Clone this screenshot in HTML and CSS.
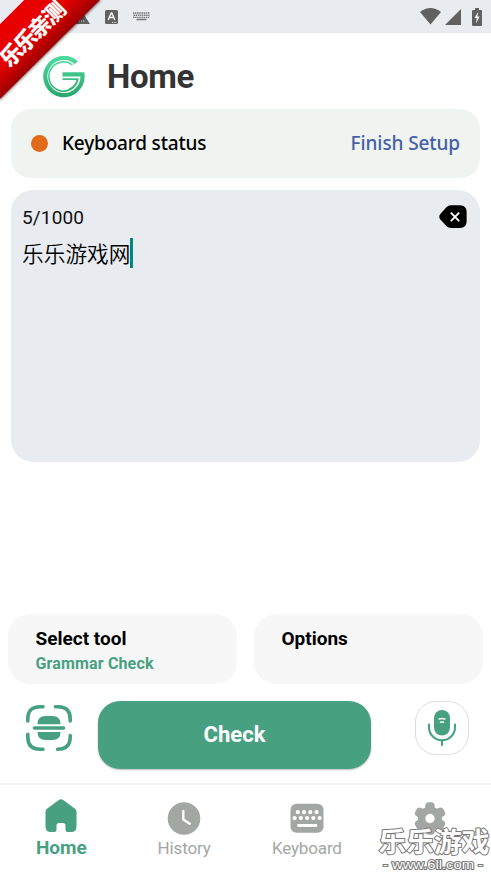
FILE: index.html
```html
<!DOCTYPE html>
<html lang="en">
<head>
<meta charset="utf-8">
<title>Home</title>
<link rel="stylesheet" href="styles.css">
</head>
<body>
<div class="app">
  <div class="statusbar">
    <div class="status-left">
      <svg width="18" height="16" viewBox="0 0 18 16"><path d="M8 1 17 15H0Z" fill="#616161"/><path d="M6 12h6" stroke="#ddd" stroke-dasharray="1 1"/></svg>
      <svg width="13" height="14" viewBox="0 0 13 14"><rect width="13" height="14" rx="1.5" fill="#616161"/><path d="M3.2 10 6.2 3h.6l3 7M4.4 7.6h4.2" fill="none" stroke="#eef0f3" stroke-width="1.5"/><path d="M7 12.500h4.500" stroke="#ddd" stroke-dasharray="1 .7"/></svg>
      <svg width="17" height="9" viewBox="0 0 17 9"><path d="M0 1h17M.5 3.200h16M0 5.400h17" stroke="#777" stroke-width="1.400" stroke-dasharray="1.500 .6"/><path d="M3.500 7.500h10" stroke="#777" stroke-width="1.500"/></svg>
    </div>
    <div class="status-right">
      <svg width="21" height="17" viewBox="0 0 21 17"><path d="M0 4Q10.500-4 21 4L10.500 16.500Z" fill="#616161"/></svg>
      <svg width="16" height="16" viewBox="0 0 16 16"><path d="M16 0V16H0Z" fill="#616161"/></svg>
      <svg width="10" height="18" viewBox="0 0 10 18"><path d="M3 0h4v2h2q1 0 1 1v14q0 1-1 1H1q-1 0-1-1V3Q0 2 1 2h2Z" fill="#616161"/><path d="M6 4 2.500 10h2.200L4 15.500 7.700 8.500H5.500Z" fill="#eef0f3"/></svg>
    </div>
  </div>

  <header class="header">
    <svg class="logo" width="42" height="42" viewBox="0 0 42 42">
      <defs><linearGradient id="lg" x1="0" y1="0" x2="0" y2="42" gradientUnits="userSpaceOnUse"><stop stop-color="#4fdc9f"/><stop offset="1" stop-color="#27a56d"/></linearGradient></defs>
      <g fill="none" stroke="url(#lg)">
        <path d="M33.300 6.600A18.600 18.600 0 1 0 39.400 18.400H19.500" stroke-width="4.200"/>
        <path d="M29.500 9A14.600 14.600 0 1 0 34.800 23.400" stroke-width="1.500"/>
        <path d="M19.500 23.200H34.600Q33 31 25.500 33.700" stroke-width="1.700"/>
      </g>
    </svg>
    <h1>Home</h1>
  </header>

  <main>
    <section class="status-card">
      <i class="dot"></i>
      <span class="label">Keyboard status</span>
      <span class="setup">Finish Setup</span>
    </section>

    <section class="editor">
      <div class="editor-top">
        <span class="count">5/1000</span>
        <svg width="28" height="24" viewBox="0 0 28 24"><path d="M1.400 9 7.600 2Q9.300.3 12 .3h9Q27.600.3 27.600 7v9.500q0 6.500-6.600 6.500h-9q-2.700 0-4.400-1.700L1.400 14.500Q-.8 11.700 1.400 9Z"/><path d="m12.300 8.200 7.400 7.400m0-7.400-7.400 7.400" stroke="#fff" stroke-width="1.900" stroke-linecap="round"/></svg>
      </div>
      <div class="entry"><span>乐乐游戏网</span><i class="caret"></i></div>
    </section>

    <section class="tools">
      <div class="tool"><b>Select tool</b><span>Grammar Check</span></div>
      <div class="tool"><b>Options</b></div>
    </section>

    <section class="actions">
      <svg class="scan" width="46" height="46" viewBox="0 0 46 46">
        <path d="M1.800 16v-2Q1.800 1.800 14 1.800h3M29.500 1.800h2.700q12 0 12 12.200v2M1.800 29.200V32q0 12.200 12.200 12.200h3M31.500 44.200Q44.200 44.200 44.200 32v-1.500" fill="none" stroke="#47a181" stroke-width="3.600" stroke-linecap="round"/>
        <path d="M11.500 19.200q0-8.200 8-8.200h7q8 0 8 8.200ZM11.500 27h23q0 8-8 8h-7q-8 0-8-8Z" fill="#47a181"/>
        <path d="M8.500 23h29" stroke="#47a181" stroke-width="3.600" stroke-linecap="round"/>
      </svg>
      <button class="check">Check</button>
      <div class="mic">
        <svg width="30" height="38" viewBox="0 0 30 38"><rect x="7" y="1" width="16" height="25.500" rx="8" fill="#47a181"/><path d="M2 15.500v2.700a13 13 0 0 0 26 0v-2.700M15 31.500V36" fill="none" stroke="#47a181" stroke-width="2.100" stroke-linecap="round"/><path d="M12.200 10q2.800-1 5.600 0M13.500 13.300q1.500-.4 3 0" fill="none" stroke="#fff" stroke-width="1.500" stroke-linecap="round"/></svg>
      </div>
    </section>
  </main>

  <nav class="nav">
    <div class="tab active">
      <svg width="34" height="36" viewBox="0 0 34 36"><path d="M1.500 13.500Q1.500 12 3 10.800L14.500 2.200Q17 .5 19.500 2.200L31 10.800q1.500 1.200 1.500 2.700v15q0 5.500-5.500 5.500h-3q-2.500 0-2.500-2.500v-3.700Q21.500 25 18.800 25h-3.600q-2.700 0-2.700 2.800v3.700Q12.500 34 10 34H7q-5.500 0-5.500-5.500Z" fill="#47a181"/></svg>
      <span>Home</span>
    </div>
    <div class="tab">
      <svg width="34" height="37" viewBox="0 0 34 37"><circle cx="17" cy="20.500" r="16.300" fill="#a2a7a3"/><path d="M16.300 13v8.500l6.500 4.200" fill="none" stroke="#fff" stroke-width="2.400" stroke-linecap="round" stroke-linejoin="round"/></svg>
      <span>History</span>
    </div>
    <div class="tab">
      <svg width="34" height="37" viewBox="0 0 34 37"><rect x=".5" y="5.800" width="33" height="29" rx="6" fill="#a2a7a3"/><g stroke="#fff" stroke-linecap="round"><path d="M7.800 14.200h19" stroke-width="4.200" stroke-dasharray="0 6.250"/><path d="M4.600 20.100h25.500" stroke-width="4.200" stroke-dasharray="0 6.250"/><path d="M8.500 27.500h17.500" stroke-width="2.800"/></g></svg>
      <span>Keyboard</span>
    </div>
    <div class="tab">
      <svg width="34" height="37" viewBox="0 0 34 37"><g fill="#a2a7a3"><circle cx="17" cy="20.500" r="12"/><g id="tooth"><rect x="12.300" y="4.300" width="9.400" height="32.400" rx="3.500"/></g><use href="#tooth" transform="rotate(60 17 20.500)"/><use href="#tooth" transform="rotate(120 17 20.500)"/></g><circle cx="17" cy="20.500" r="4.700" fill="#fff"/></svg>
    </div>
  </nav>

  <div class="ribbon">
    <svg width="104" height="104" viewBox="0 0 104 104">
      <defs><linearGradient id="red" x1="25" y1="25" x2="52" y2="52" gradientUnits="userSpaceOnUse"><stop stop-color="#e80000"/><stop offset=".35" stop-color="#e30000"/><stop offset="1" stop-color="#930000"/></linearGradient><filter id="sh"><feGaussianBlur stdDeviation="1.300"/></filter></defs>
      <path d="M24 0H102L0 101V24Z" fill="#0006" filter="url(#sh)"/>
      <path d="M24 0H100L0 99V24Z" fill="url(#red)"/>
      <path d="M0 0H24L0 24Z" fill="#e8ebf0"/>
      <text class="ribbon-text" transform="translate(9.500 68.500) rotate(-45)">乐乐亲测</text>
    </svg>
  </div>
  <div class="watermark">
    <svg width="116" height="50" viewBox="0 0 116 50">
      <text class="wm-name" x="3.500" y="28" textLength="111" lengthAdjust="spacingAndGlyphs">乐乐游戏</text>
      <text class="wm-url" x="8" y="45" textLength="100" lengthAdjust="spacingAndGlyphs">- www.6ll.com -</text>
    </svg>
  </div>
</div>
</body>
</html>
```
FILE: styles.css
```css
* { box-sizing: border-box; }
body { margin: 0; background: #fff; font-family: Roboto, "Noto Sans CJK SC", sans-serif; }
.app { position: relative; width: 491px; height: 874px; overflow: hidden; display: flex; flex-direction: column; }
svg { display: block; flex: none; }

.statusbar { height: 33px; background: #e8ebf0; display: flex; justify-content: space-between; padding: 0 9px 0 73px; }
.status-left, .status-right { display: flex; align-items: center; }
.status-left { gap: 14px; }
.status-left svg:last-child { margin-left: 1px; }
.status-right { gap: 4px; }
.status-right svg:last-child { margin-left: 7px; }

.header { height: 76px; display: flex; align-items: center; padding: 11px 0 0 43px; gap: 22px; }
.header h1 { margin: 0; font-size: 33px; line-height: 40px; font-weight: 700; letter-spacing: -.3px; color: #333; }

main { flex: none; }
.status-card { margin: 0 11px; height: 69px; border-radius: 20px; background: #eff4f0; display: flex; align-items: center; padding: 0 20px 1px; font: 500 19px/26px "Noto Sans", sans-serif; letter-spacing: -.18px; }
.dot { width: 17px; height: 17px; border-radius: 50%; background: #e26a1b; margin-right: 14px; }
.label { color: #000; }
.setup { color: #4460a8; margin-left: auto; letter-spacing: -.1px; }

.editor { margin: 12px 11px 0; height: 272px; border-radius: 22px; background: #e8ebf0; padding: 15px 13px 0 11px; }
.editor-top { display: flex; justify-content: space-between; height: 25px; }
.count { font-size: 19px; line-height: 25px; letter-spacing: .15px; color: #111; }
.entry { display: flex; align-items: center; margin-top: 8px; height: 30px; font: 350 21.7px/30px "Noto Sans CJK SC", sans-serif; color: #000; }
.caret { width: 3px; height: 30px; background: #00897b; }

.tools { display: flex; gap: 17px; margin: 152px 8px 0; }
.tool { flex: 1; height: 70px; border-radius: 22px; background: #f7f7f7; padding: 12px 0 0 27.5px; display: flex; flex-direction: column; }
.tool b { font-weight: 700; font-size: 19px; line-height: 26px; color: #000; }
.tool span { font-weight: 700; font-size: 16px; line-height: 23px; letter-spacing: .15px; color: #47a181; }

.actions { display: flex; height: 68px; margin: 17px 22px 0 26px; justify-content: space-between; align-items: flex-start; }
.scan { margin-top: 4px; }
.check { width: 273px; height: 68px; margin-left: 8px; border: 0; border-radius: 22px; background: #47a181; color: #fff; font: 700 22px/30px Roboto, sans-serif; box-shadow: 0 1px 2px #0004; padding: 0; }
.mic { width: 54px; height: 54px; border: 1px solid #ddd; border-radius: 21px; display: flex; justify-content: center; padding-top: 7px; margin-left: 26px; }

.nav { margin-top: 14px; height: 91px; border-top: 2px solid #f4f4f4; display: flex; }
.tab { flex: 1; display: flex; flex-direction: column; align-items: center; padding-top: 13px; color: #a2a7a3; font-size: 17px; }
.tab span { line-height: 22px; margin-top: 2px; letter-spacing: -.15px; }
.tab.active { color: #47a181; font-size: 19px; font-weight: 700; }
.tab.active span { margin-top: 3px; letter-spacing: 0; }

.ribbon { position: absolute; left: 0; top: 0; }
.ribbon-text { font: 900 22px "Noto Sans CJK SC", sans-serif; letter-spacing: -2px; fill: #fff; }
.watermark { position: absolute; left: 375px; top: 824px; }
.wm-name, .wm-url { fill: #fff; stroke: #777; paint-order: stroke; stroke-linejoin: round; }
.wm-name { font: 700 27px "Noto Sans CJK SC", sans-serif; stroke-width: 2px; }
.wm-url { font: 400 13px "Liberation Sans", sans-serif; stroke-width: 2px; }
```
